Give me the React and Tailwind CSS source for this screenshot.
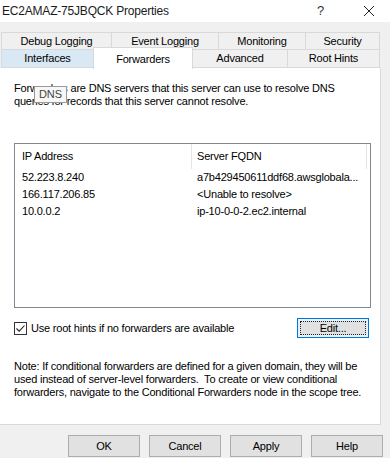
import React from 'react'

const ROW1 = [
  { label: 'Debug Logging', w: 'w-[111px]' },
  { label: 'Event Logging', w: 'w-[107px]' },
  { label: 'Monitoring', w: 'w-[87px]' },
  { label: 'Security', w: 'w-[74px]' },
]

const forwarders = [
  { ip: '52.223.8.240', fqdn: 'a7b429450611ddf68.awsglobala...' },
  { ip: '166.117.206.85', fqdn: '<Unable to resolve>' },
  { ip: '10.0.0.2', fqdn: 'ip-10-0-0-2.ec2.internal' },
]

const App = () => {
  return (
    <div className="w-[390px] h-[458px] overflow-hidden bg-[#f0f0f0] text-[11px] tracking-[-0.2px] text-black font-['Liberation_Sans',Arial,sans-serif] flex flex-col">
      {/* Title bar */}
      <div className="h-[22px] bg-white flex items-center pl-[2px] shrink-0">
        <span className="text-[12px] tracking-[-0.2px] text-[#1a1a1a]">EC2AMAZ-75JBQCK Properties</span>
        <span className="ml-auto mr-[39px] text-[13px] text-[#333]">?</span>
        <svg width="12" height="12" viewBox="0 0 12 12" className="mr-[15px]">
          <path d="M1 1L11 11M11 1L1 11" stroke="#222" strokeWidth="1" />
        </svg>
      </div>

      {/* Tabs */}
      <div className="pt-[10px] pl-[1px] shrink-0">
        <div className="flex h-[17px]">
          {ROW1.map((t, i) => (
            <div
              key={t.label}
              className={`${t.w} border-t border-r border-[#d9d9d9] ${i === 0 ? 'border-l' : ''} flex items-center justify-center`}
            >
              {t.label}
            </div>
          ))}
        </div>
        <div className="flex h-[19px] relative z-10">
          <div className="w-[92px] bg-[#d9e8f5] border-l border-t border-b border-[#d9d9d9] flex items-center justify-center">Interfaces</div>
          <div className="w-[100px] -mt-[2px] h-[22px] bg-white border-t border-l border-r border-[#d9d9d9] flex items-start justify-center pt-[3px]">Forwarders</div>
          <div className="w-[94px] border-t border-b border-[#d9d9d9] flex items-center justify-center">Advanced</div>
          <div className="w-[93px] border-t border-l border-r border-b border-[#d9d9d9] flex items-center justify-center">Root Hints</div>
        </div>
      </div>

      {/* Panel */}
      <div className="relative w-[381px] h-[357px] bg-white border-r border-b border-[#d9d9d9] shrink-0">
        <p className="pt-[14px] pl-[14px] pr-[30px] leading-[13px]">
          Forwarders are DNS servers that this server can use to resolve DNS queries for records that this server cannot resolve.
        </p>
        <div className="absolute left-[34px] top-[18px] w-[33px] h-[17px] bg-[#f7f7f7] border border-[#9a9a9a] text-[#444] text-[11px] tracking-normal flex items-center justify-center">
          DNS
        </div>

        {/* List */}
        <div className="mt-[35px] ml-[14px] w-[357px] h-[165px] border border-[#828790]">
          <div className="flex h-[25px]">
            <div className="w-[177px] pl-[7px] flex items-center border-r border-[#e5e5e5]">IP Address</div>
            <div className="w-[175px] pl-[5px] flex items-center border-r border-[#e5e5e5]">Server FQDN</div>
          </div>
          {forwarders.map((f) => (
            <div key={f.ip} className="flex h-[17px] items-center">
              <div className="w-[178px] pl-[7px]">{f.ip}</div>
              <div className="pl-[4px] whitespace-nowrap">{f.fqdn}</div>
            </div>
          ))}
        </div>

        {/* Root hints row */}
        <div className="flex items-center mt-[10px] h-[20px]">
          <div className="ml-[14px] w-[13px] h-[13px] border border-[#333] bg-white flex items-center justify-center">
            <svg width="11" height="11" viewBox="0 0 11 11">
              <path d="M1.5 5.5L4.2 8.2L9.5 2.5" fill="none" stroke="#222" strokeWidth="1.1" />
            </svg>
          </div>
          <span className="ml-[4px]">Use root hints if no forwarders are available</span>
          <div className="ml-auto mr-[11px] w-[72px] h-[20px] bg-[#e5f1fb] border border-[#0078d7] p-[2px]">
            <div className="w-full h-full border border-dotted border-[#222] bg-[#e1e1e1] flex items-center justify-center">
              Edit...
            </div>
          </div>
        </div>

        <p className="mt-[22px] pl-[14px] pr-[12px] leading-[13px]">
          Note: If conditional forwarders are defined for a given domain, they will be used instead of server-level forwarders.&nbsp; To create or view conditional forwarders, navigate to the Conditional Forwarders node in the scope tree.
        </p>
      </div>

      {/* Buttons */}
      <div className="flex pt-[10px] pl-[68px] gap-[9px]">
        {['OK', 'Cancel', 'Apply', 'Help'].map((b) => (
          <button
            key={b}
            className="w-[72px] h-[22px] bg-[#e1e1e1] border border-[#adadad] flex items-center justify-center text-[11px]"
          >
            {b}
          </button>
        ))}
      </div>
    </div>
  )
}

export default App
